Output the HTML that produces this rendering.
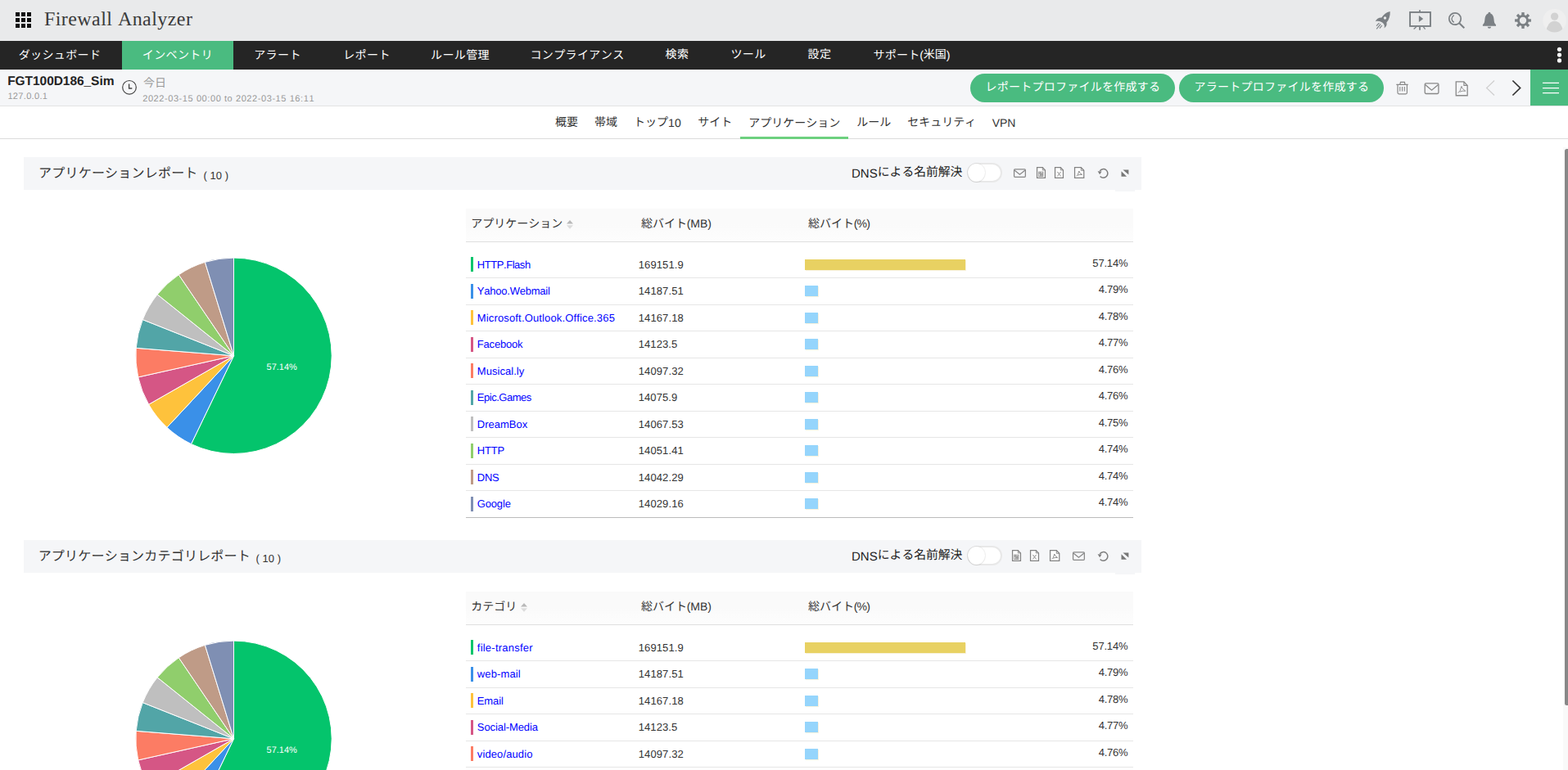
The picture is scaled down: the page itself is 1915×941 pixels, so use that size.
<!DOCTYPE html>
<html lang="ja"><head><meta charset="utf-8"><title>Firewall Analyzer</title>
<style>
html,body{margin:0;padding:0}
body{width:1915px;height:941px;overflow:hidden;background:#fff;position:relative;font-family:"Liberation Sans",sans-serif;font-size:13px;color:#333;font-kerning:none;text-rendering:geometricPrecision}
.t{position:absolute;white-space:nowrap;display:block}
.j{display:block;white-space:nowrap;font-family:"Liberation Sans","Noto Sans CJK JP",sans-serif}
.abs{position:absolute}
svg.ic{position:absolute;overflow:visible}

#top{position:absolute;left:0;top:0;width:1915px;height:50px;background:#e9eaeb}
#nav{position:absolute;left:0;top:50px;width:1915px;height:35px;background:#252525}
#nav .act{position:absolute;left:149px;top:0;width:136px;height:35px;background:#4abb80}
#sub{position:absolute;left:0;top:85px;width:1915px;height:44px;background:#f5f6f8;border-bottom:1px solid #e3e3e3}
.btn{position:absolute;top:5px;height:35px;width:250px;border-radius:18px;background:#4abb80}
#menu{position:absolute;left:1869px;top:0;width:46px;height:44px;background:#4abb80}
#tabs{position:absolute;left:0;top:130px;width:1915px;height:39px;border-bottom:1px solid #dcdcdc;background:#fff}
#tabs .ul{position:absolute;left:904px;top:37px;width:132px;height:3px;background:#6dd07f}
.rep{position:absolute;left:0;width:1915px;height:468px}
.rh{position:absolute;left:29px;top:0;width:1365px;height:40px;background:#f5f6f8}
.th{position:absolute;left:569px;top:63px;width:815px;height:40px;background:linear-gradient(#fafafa 48%,#fdfdfd);border-bottom:1px solid #dfdfdf}
.row{position:absolute;left:569px;width:815px;height:1px;background:#e6e6e6}
.row.last{background:#bcbcbc}
.cb{position:absolute;left:575px;width:3px;height:18px}
.bar{position:absolute;left:983px;height:13px;box-shadow:1px 1px 0 rgba(238,222,170,.4)}
.tog{position:absolute;left:1181px;top:7px;width:39px;height:20px;border-radius:12px;background:#fff;border:2px solid #e8e8e8}
.tog b{position:absolute;left:-1px;top:-1px;width:21px;height:22px;border-radius:50%;background:#fff;box-shadow:0 0 0 1px rgba(0,0,0,.06),0 1px 1px rgba(0,0,0,.05)}
#sbt{position:absolute;left:1909px;top:180px;width:6px;height:761px;background:#f9f9f9}
#sb{position:absolute;left:1911px;top:182px;width:4px;height:680px;background:#888;border-radius:2.5px 0 0 2.5px}
</style></head><body>
<div id="top"><svg class="ic" style="left:19px;top:15px" width="19" height="19" viewBox="0 0 19 19" fill="#111"><rect x="0" y="0" width="5" height="5"/><rect x="7" y="0" width="5" height="5"/><rect x="14" y="0" width="5" height="5"/><rect x="0" y="7" width="5" height="5"/><rect x="7" y="7" width="5" height="5"/><rect x="14" y="7" width="5" height="5"/><rect x="0" y="14" width="5" height="5"/><rect x="7" y="14" width="5" height="5"/><rect x="14" y="14" width="5" height="5"/></svg><span class="t" style="left:53.90px;top:12px;font-size:24px;line-height:24px;color:#3a3a3a;font-family:'Liberation Serif',serif;letter-spacing:0.445px;">Firewall Analyzer</span><svg class="ic" style="left:1676px;top:10px" width="26" height="28" viewBox="0 0 26 28"><path fill="#7b8084" fill-rule="evenodd" d="M21.7 4C17 5 13.5 8 11.4 11.6C8 11.3 5 13.5 3.8 16.2C6 15.5 9 15.8 11.2 16.9C12.5 17.6 13.7 18.7 14.4 19.9C15 21.5 15 23 14.4 24.5C17 23 18.2 20.5 17.4 17.6C20.5 14 22 9 21.7 4ZM15.5 10.3a1.7 1.7 0 1 0 .01 0Z"/><path stroke="#7b8084" stroke-width="1.1" fill="none" d="M8.4 18.1L5 21.7M10.2 19.4L5.2 25.4M11.9 21L8.9 24.7"/></svg><svg class="ic" style="left:1720px;top:11px" width="30" height="27" viewBox="0 0 30 27"><rect x="2.05" y="3.95" width="24.9" height="17" fill="none" stroke="#7b8084" stroke-width="1.9"/><path stroke="#7b8084" stroke-width="1.8" fill="none" d="M14 1.2V3.2M14 21.9V25.8"/><path stroke="#7b8084" stroke-width="1.3" fill="none" d="M9.6 21.9L6.6 24.6M18.4 21.9L20.6 24.6"/><path fill="#7b8084" d="M12.9 8.1V15.9L18.2 12Z"/></svg><svg class="ic" style="left:1766px;top:12px" width="26" height="26" viewBox="0 0 26 26" fill="none" stroke="#7b8084"><circle cx="11" cy="11" r="7.2" stroke-width="1.75"/><path stroke-width="2.1" d="M16.2 16.2L22.3 22.3"/><path stroke-width="1.4" d="M9.7 6.5Q4.2 11 9.7 15.4"/></svg><svg class="ic" style="left:1808px;top:12px" width="22" height="26" viewBox="0 0 22 26" fill="#7b8084"><path d="M10.95 2.8a1.5 1.5 0 0 1 1.5 1.6C15.2 5.5 16.3 8 16.5 11.5C16.7 15 17.2 16.8 19 18.2V19.85H2.9V18.2C4.7 16.8 5.2 15 5.4 11.5C5.6 8 6.7 5.5 9.45 4.4A1.5 1.5 0 0 1 10.95 2.8Z"/><path d="M8.8 20.7H13.1A2.15 2.15 0 0 1 8.8 20.7Z"/></svg><svg class="ic" style="left:1848px;top:13px" width="24" height="24" viewBox="-12 -12 24 24"><g fill="#7b8084"><rect x="-1.7" y="-9.9" width="3.4" height="4" transform="rotate(0)"/><rect x="-1.7" y="-9.9" width="3.4" height="4" transform="rotate(45)"/><rect x="-1.7" y="-9.9" width="3.4" height="4" transform="rotate(90)"/><rect x="-1.7" y="-9.9" width="3.4" height="4" transform="rotate(135)"/><rect x="-1.7" y="-9.9" width="3.4" height="4" transform="rotate(180)"/><rect x="-1.7" y="-9.9" width="3.4" height="4" transform="rotate(225)"/><rect x="-1.7" y="-9.9" width="3.4" height="4" transform="rotate(270)"/><rect x="-1.7" y="-9.9" width="3.4" height="4" transform="rotate(315)"/></g><circle r="5.6" fill="none" stroke="#7b8084" stroke-width="2.8"/></svg><svg class="ic" style="left:1884px;top:10px" width="31" height="31" viewBox="0 0 31 31"><defs><clipPath id="av"><circle cx="14.6" cy="15.2" r="14.3"/></clipPath></defs><circle cx="14.6" cy="15.2" r="14.3" fill="#efefef"/><g clip-path="url(#av)" fill="#d2d2d2"><circle cx="14.6" cy="10.1" r="4.65"/><ellipse cx="14.6" cy="28.5" rx="10" ry="12.7"/></g></svg></div><div id="nav"><div class="act"></div><span class="j" style="position:absolute;left:22.63px;top:9.84px;width:100.74px;height:15.30px;font-size:14px;line-height:15.30px;color:#fff;letter-spacing:0.39px;">ダッシュボード</span><span class="j" style="position:absolute;left:173.82px;top:9.65px;width:86.35px;height:15.30px;font-size:14px;line-height:15.30px;color:#fff;letter-spacing:0.39px;">インベントリ</span><span class="j" style="position:absolute;left:310.22px;top:9.54px;width:57.57px;height:15.30px;font-size:14px;line-height:15.30px;color:#fff;letter-spacing:0.39px;">アラート</span><span class="j" style="position:absolute;left:419.22px;top:10.11px;width:57.57px;height:15.30px;font-size:14px;line-height:15.30px;color:#fff;letter-spacing:0.39px;">レポート</span><span class="j" style="position:absolute;left:526.02px;top:9.79px;width:71.96px;height:15.30px;font-size:14px;line-height:15.30px;color:#fff;letter-spacing:0.39px;">ルール管理</span><span class="j" style="position:absolute;left:647.43px;top:9.99px;width:115.14px;height:15.30px;font-size:14px;line-height:15.30px;color:#fff;letter-spacing:0.39px;">コンプライアンス</span><span class="j" style="position:absolute;left:812.61px;top:10.45px;width:28.78px;height:13.85px;font-size:14px;line-height:13.85px;color:#fff;letter-spacing:0.39px;">検索</span><span class="j" style="position:absolute;left:892.41px;top:9.48px;width:43.18px;height:15.30px;font-size:14px;line-height:15.30px;color:#fff;letter-spacing:0.39px;">ツール</span><span class="j" style="position:absolute;left:986.61px;top:10.43px;width:28.78px;height:13.85px;font-size:14px;line-height:13.85px;color:#fff;letter-spacing:0.39px;">設定</span><span class="j" style="position:absolute;left:1066.44px;top:10.07px;width:57.12px;height:15.30px;font-size:14px;line-height:15.30px;color:#fff;letter-spacing:0.28px;">サポート</span><span class="t" style="left:1123.20px;top:10px;font-size:14px;line-height:14px;color:#fff;letter-spacing:-0.562px;">(</span><span class="j" style="position:absolute;left:1127.70px;top:10.48px;width:28.00px;height:13.85px;font-size:14px;line-height:13.85px;color:#fff;">米国</span><span class="t" style="left:1155.70px;top:10px;font-size:14px;line-height:14px;color:#fff;letter-spacing:-0.562px;">)</span><svg class="ic" style="left:1900px;top:7px" width="9" height="20" viewBox="0 0 9 20" fill="#fff"><circle cx="4.5" cy="3.3" r="2.6"/><circle cx="4.5" cy="10.1" r="2.6"/><circle cx="4.5" cy="16.9" r="2.6"/></svg></div><div id="sub"><span class="t" style="left:9.20px;top:7px;font-size:15.5px;line-height:15.5px;color:#222;font-weight:bold;letter-spacing:-0.054px;">FGT100D186_Sim</span><span class="t" style="left:9.40px;top:28px;font-size:11px;line-height:11px;color:#999;letter-spacing:0.336px;">127.0.0.1</span><svg class="ic" style="left:148px;top:12px" width="20" height="20" viewBox="0 0 20 20" fill="none" stroke="#444"><circle cx="10" cy="9.8" r="8.3" stroke-width="1.2"/><path stroke-width="1.4" d="M9.6 5.6V11H13.3"/></svg><span class="j" style="position:absolute;left:175.00px;top:9.61px;width:28.00px;height:13.58px;font-size:14px;line-height:13.58px;color:#9a9a9a;">今日</span><span class="t" style="left:174.20px;top:31px;font-size:11px;line-height:11px;color:#999;letter-spacing:0.581px;">2022-03-15 00:00 to 2022-03-15 16:11</span><div class="btn" style="left:1185px"></div><span class="j" style="position:absolute;left:1203.41px;top:13.72px;width:213.78px;height:15.20px;font-size:14px;line-height:15.20px;color:#fff;letter-spacing:0.25px;">レポートプロファイルを作成する</span><div class="btn" style="left:1440px"></div><span class="j" style="position:absolute;left:1458.41px;top:13.65px;width:213.78px;height:15.20px;font-size:14px;line-height:15.20px;color:#fff;letter-spacing:0.25px;">アラートプロファイルを作成する</span><svg class="ic" style="left:1703px;top:13px" width="20" height="20" viewBox="0 0 20 20" fill="none" stroke="#888" stroke-width="1.2"><path d="M2.3 5.3H16.7M6.7 5.3L7.5 2.4H12.4L13 5.3M4 5.3V15.3Q4 16.8 5.5 16.8H13.9Q15.4 16.8 15.4 15.3V5.3"/><path stroke-width="1.1" d="M6.8 8V13.6M9.6 8V13.6M12.3 8V13.6"/></svg><svg class="ic" style="left:1738px;top:15px" width="22" height="18" viewBox="0 0 22 18" fill="none" stroke="#888" stroke-width="1.3"><rect x="2.2" y="1.9" width="16.7" height="12.6" rx="1.4"/><path d="M2.6 3.6L10.5 10.2L18.5 3.6"/></svg><svg class="ic" style="left:1776px;top:13px" width="20" height="22" viewBox="0 0 20 22" fill="none" stroke="#888" stroke-width="1.3"><path d="M2.25 1.95H11.9L16.15 6.4V18.75H2.25Z"/><path d="M11.9 1.95V6.4H16.15" stroke-width="1.1"/><path stroke-width="0.9" d="M4.70 15.60 Q7.70 14.10 8.80 7.80 Q9.80 10.80 13.80 13.20 M8.80 7.80 Q9.10 7.00 9.40 8.20 M6.80 14.20 Q10.20 12.70 13.80 13.20"/></svg><svg class="ic" style="left:1812px;top:12px" width="16" height="22" viewBox="0 0 16 22" fill="none"><path stroke="#cfcfcf" stroke-width="1.2" d="M13 1.5L3.6 10.5L13 19.5"/></svg><svg class="ic" style="left:1844px;top:12px" width="16" height="22" viewBox="0 0 16 22" fill="none"><path stroke="#333" stroke-width="1.7" d="M3.4 1.5L12.6 10.5L3.4 19.5"/></svg><div id="menu"><svg class="ic" style="left:15px;top:14px" width="20" height="16" viewBox="0 0 20 16" stroke="#fff" stroke-width="1.25"><path d="M0 2.3H20M0 8.5H20M0 14.6H20"/></svg></div></div><div id="tabs"><span class="j" style="position:absolute;left:678.00px;top:13.10px;width:28.00px;height:13.58px;font-size:14px;line-height:13.58px;color:#333;">概要</span><span class="j" style="position:absolute;left:726.00px;top:13.11px;width:28.00px;height:13.58px;font-size:14px;line-height:13.58px;color:#333;">帯域</span><span class="j" style="position:absolute;left:852.20px;top:12.23px;width:42.00px;height:15.00px;font-size:14px;line-height:15.00px;color:#333;">サイト</span><span class="j" style="position:absolute;left:914.20px;top:12.51px;width:112.00px;height:15.00px;font-size:14px;line-height:15.00px;color:#333;">アプリケーション</span><span class="j" style="position:absolute;left:1046.20px;top:12.15px;width:42.00px;height:15.00px;font-size:14px;line-height:15.00px;color:#333;">ルール</span><span class="j" style="position:absolute;left:1108.20px;top:12.05px;width:84.00px;height:15.00px;font-size:14px;line-height:15.00px;color:#333;">セキュリティ</span><span class="j" style="position:absolute;left:774.00px;top:12.37px;width:42.00px;height:15.00px;font-size:14px;line-height:15.00px;color:#333;">トップ</span><span class="t" style="left:816.00px;top:13px;font-size:14px;line-height:14px;color:#333;letter-spacing:0.264px;">10</span><span class="t" style="left:1211.80px;top:13px;font-size:14px;line-height:14px;color:#333;letter-spacing:-0.095px;">VPN</span><div class="ul"></div></div><section class="rep" style="top:192px"><div class="rh"></div><div class="abs" style="left:1362px;top:40px;width:24px;height:2px;background:#f5f6f8"></div><span class="j" style="position:absolute;left:47.05px;top:12.33px;width:194.50px;height:17.10px;font-size:16px;line-height:17.10px;color:#333;letter-spacing:0.21px;">アプリケーションレポート</span><span class="t" style="left:248.50px;top:16px;font-size:13px;line-height:13px;color:#333;letter-spacing:0.026px;">( 10 )</span><span class="t" style="left:1040.10px;top:13px;font-size:15px;line-height:15px;color:#222;letter-spacing:-0.057px;">DNS</span><span class="j" style="position:absolute;left:1071.80px;top:11.47px;width:103.60px;height:16.10px;font-size:14.8px;line-height:16.10px;color:#222;">による名前解決</span><div class="tog"><b></b></div><svg class="ic" style="left:1236.6px;top:12.6px" width="18" height="14" viewBox="0 0 18 14" fill="none" stroke="#888" stroke-width="1.25"><rect x="1.55" y="1.75" width="13.8" height="9.5" rx="1"/><path d="M1.9 3L8.45 8.3L15 3"/></svg><svg class="ic" style="left:1264.5px;top:10.5px" width="14" height="16" viewBox="0 0 14 16" fill="none" stroke="#828282" stroke-width="1.25"><path fill="#fff" d="M1.55 1.55H8.3L11.45 4.9V14.3H1.55Z"/><path d="M8.3 1.55V4.9H11.45" stroke-width=".9"/><rect x="3.2" y="6.6" width="6.1" height="6.3" fill="#828282" stroke="none"/><g fill="#fff" stroke="none"><rect x="3.8" y="7.3" width="1" height="1"/><rect x="5.7" y="7.3" width="2.9" height="0.9"/><rect x="3.8" y="9.2" width="1" height="3.1"/><rect x="5.7" y="9.2" width="1" height="1"/><rect x="7.6" y="9.2" width="1" height="1"/><rect x="5.7" y="11.2" width="1" height="1"/><rect x="7.6" y="11.2" width="1" height="1"/></g></svg><svg class="ic" style="left:1286.5px;top:10.5px" width="14" height="16" viewBox="0 0 14 16" fill="none" stroke="#828282" stroke-width="1.25"><path fill="#fff" d="M1.55 1.55H8.3L11.45 4.9V14.3H1.55Z"/><path d="M8.3 1.55V4.9H11.45" stroke-width=".9"/><path stroke-width=".95" d="M4.4 6.9Q6.3 9.5 8.6 12.4M8.6 6.9Q6.4 9.8 4.4 12.4"/></svg><svg class="ic" style="left:1310.8px;top:10.5px" width="15" height="16" viewBox="0 0 15 16" fill="none" stroke="#828282" stroke-width="1.25"><path fill="#fff" d="M1.55 1.55H9.3L12.75 5.3V14.3H1.55Z"/><path d="M9.3 1.55V5.3H12.75" stroke-width=".9"/><path stroke-width="0.9" d="M3.49 12.32 Q5.83 11.15 6.69 6.24 Q7.47 8.58 10.59 10.45 M6.69 6.24 Q6.92 5.61 7.16 6.55 M5.13 11.23 Q7.78 10.06 10.59 10.45"/></svg><svg class="ic" style="left:1340px;top:12.2px" width="16" height="16" viewBox="0 0 16 16" fill="none" stroke="#7d7d7d" stroke-width="1.5"><path d="M3.2 4.9A5.3 5.3 0 1 1 3.6 11.4"/><path fill="#7d7d7d" stroke="none" d="M0.6 5.2L5.6 5.4L3.1 9.2Z"/></svg><svg class="ic" style="left:1369.4px;top:14.5px" width="11" height="10" viewBox="0 0 11 10" fill="#777"><path d="M2.4 .6H9.4V6.5Z"/><path d="M.5 2.3V8.7H7.1Z"/></svg><svg class="ic" style="left:160px;top:117px" width="252" height="252" viewBox="160 0 252 252"><g stroke="#fff" stroke-width="1" stroke-linejoin="round"><path fill="#04c46c" d="M285.50 125.80L285.50 6.10A119.70 119.70 0 1 1 233.54 233.63Z"/><path fill="#3a90e8" d="M285.50 125.80L233.54 233.63A119.70 119.70 0 0 1 203.89 213.36Z"/><path fill="#fec23c" d="M285.50 125.80L203.89 213.36A119.70 119.70 0 0 1 181.61 185.26Z"/><path fill="#d55685" d="M285.50 125.80L181.61 185.26A119.70 119.70 0 0 1 168.69 151.93Z"/><path fill="#fc7c64" d="M285.50 125.80L168.69 151.93A119.70 119.70 0 0 1 166.18 116.33Z"/><path fill="#52a5a7" d="M285.50 125.80L166.18 116.33A119.70 119.70 0 0 1 174.25 81.62Z"/><path fill="#bfbfbf" d="M285.50 125.80L174.25 81.62A119.70 119.70 0 0 1 192.17 50.85Z"/><path fill="#90ce6c" d="M285.50 125.80L192.17 50.85A119.70 119.70 0 0 1 218.32 26.73Z"/><path fill="#bf9b87" d="M285.50 125.80L218.32 26.73A119.70 119.70 0 0 1 250.38 11.37Z"/><path fill="#7f8fb3" d="M285.50 125.80L250.38 11.37A119.70 119.70 0 0 1 285.50 6.10Z"/></g><text x="344.2" y="143.2" text-anchor="middle" font-family="Liberation Sans,sans-serif" font-size="11" fill="#fff">57.14%</text></svg><div class="th"></div><span class="j" style="position:absolute;left:575.30px;top:73.81px;width:112.00px;height:15.00px;font-size:14px;line-height:15.00px;color:#333;">アプリケーション</span><svg class="ic" style="left:692.2px;top:77px" width="8" height="11" viewBox="0 0 8 11"><path fill="#b9b9b9" d="M4 0L8 4.6H0Z"/><path fill="#dcdcdc" d="M0 6.2H8L4 10.8Z"/></svg><span class="j" style="position:absolute;left:783.00px;top:73.71px;width:56.00px;height:15.00px;font-size:14px;line-height:15.00px;color:#333;">総バイト</span><span class="t" style="left:838.70px;top:74px;font-size:14px;line-height:14px;color:#333;letter-spacing:-0.056px;">(MB)</span><span class="j" style="position:absolute;left:987.00px;top:73.71px;width:56.00px;height:15.00px;font-size:14px;line-height:15.00px;color:#333;">総バイト</span><span class="t" style="left:1042.70px;top:74px;font-size:14px;line-height:14px;color:#333;letter-spacing:-0.757px;">(%)</span><div class="cb" style="top:122.2px;background:#04c46c"></div><span class="t" style="left:582.80px;top:125px;font-size:13px;line-height:13px;color:#0000ff;letter-spacing:-0.444px;">HTTP.Flash</span><span class="t" style="left:779.70px;top:125px;font-size:13px;line-height:13px;color:#333;letter-spacing:0.116px;">169151.9</span><div class="bar" style="top:125.0px;width:196.0px;background:#e8d162"></div><span class="t" style="left:1334.36px;top:123px;font-size:13px;line-height:13px;color:#333;letter-spacing:-0.191px;">57.14%</span><div class="row" style="top:147px"></div><div class="cb" style="top:154.7px;background:#3a90e8"></div><span class="t" style="left:582.80px;top:157px;font-size:13px;line-height:13px;color:#0000ff;letter-spacing:-0.221px;">Yahoo.Webmail</span><span class="t" style="left:779.70px;top:157px;font-size:13px;line-height:13px;color:#333;letter-spacing:0.116px;">14187.51</span><div class="bar" style="top:157.0px;width:16.0px;background:#95d5fc"></div><span class="t" style="left:1341.80px;top:155px;font-size:13px;line-height:13px;color:#333;letter-spacing:-0.291px;">4.79%</span><div class="row" style="top:180px"></div><div class="cb" style="top:187.2px;background:#fec23c"></div><span class="t" style="left:582.80px;top:190px;font-size:13px;line-height:13px;color:#0000ff;letter-spacing:0.150px;">Microsoft.Outlook.Office.365</span><span class="t" style="left:779.70px;top:190px;font-size:13px;line-height:13px;color:#333;letter-spacing:0.116px;">14167.18</span><div class="bar" style="top:190.0px;width:16.0px;background:#95d5fc"></div><span class="t" style="left:1341.80px;top:188px;font-size:13px;line-height:13px;color:#333;letter-spacing:-0.291px;">4.78%</span><div class="row" style="top:212px"></div><div class="cb" style="top:219.7px;background:#d55685"></div><span class="t" style="left:582.80px;top:222px;font-size:13px;line-height:13px;color:#0000ff;letter-spacing:-0.186px;">Facebook</span><span class="t" style="left:779.70px;top:222px;font-size:13px;line-height:13px;color:#333;letter-spacing:0.088px;">14123.5</span><div class="bar" style="top:222.0px;width:16.0px;background:#95d5fc"></div><span class="t" style="left:1341.80px;top:220px;font-size:13px;line-height:13px;color:#333;letter-spacing:-0.291px;">4.77%</span><div class="row" style="top:245px"></div><div class="cb" style="top:252.2px;background:#fc7c64"></div><span class="t" style="left:582.80px;top:255px;font-size:13px;line-height:13px;color:#0000ff;letter-spacing:0.043px;">Musical.ly</span><span class="t" style="left:779.70px;top:255px;font-size:13px;line-height:13px;color:#333;letter-spacing:0.116px;">14097.32</span><div class="bar" style="top:255.0px;width:16.0px;background:#95d5fc"></div><span class="t" style="left:1341.80px;top:253px;font-size:13px;line-height:13px;color:#333;letter-spacing:-0.291px;">4.76%</span><div class="row" style="top:277px"></div><div class="cb" style="top:284.7px;background:#52a5a7"></div><span class="t" style="left:582.80px;top:287px;font-size:13px;line-height:13px;color:#0000ff;letter-spacing:-0.480px;">Epic.Games</span><span class="t" style="left:779.70px;top:287px;font-size:13px;line-height:13px;color:#333;letter-spacing:0.088px;">14075.9</span><div class="bar" style="top:287.0px;width:16.0px;background:#95d5fc"></div><span class="t" style="left:1341.80px;top:285px;font-size:13px;line-height:13px;color:#333;letter-spacing:-0.291px;">4.76%</span><div class="row" style="top:310px"></div><div class="cb" style="top:317.2px;background:#bfbfbf"></div><span class="t" style="left:582.80px;top:320px;font-size:13px;line-height:13px;color:#0000ff;">DreamBox</span><span class="t" style="left:779.70px;top:320px;font-size:13px;line-height:13px;color:#333;letter-spacing:0.116px;">14067.53</span><div class="bar" style="top:320.0px;width:16.0px;background:#95d5fc"></div><span class="t" style="left:1341.80px;top:318px;font-size:13px;line-height:13px;color:#333;letter-spacing:-0.291px;">4.75%</span><div class="row" style="top:342px"></div><div class="cb" style="top:349.7px;background:#90ce6c"></div><span class="t" style="left:582.80px;top:352px;font-size:13px;line-height:13px;color:#0000ff;letter-spacing:-0.160px;">HTTP</span><span class="t" style="left:779.70px;top:352px;font-size:13px;line-height:13px;color:#333;letter-spacing:0.116px;">14051.41</span><div class="bar" style="top:352.0px;width:16.0px;background:#95d5fc"></div><span class="t" style="left:1341.80px;top:350px;font-size:13px;line-height:13px;color:#333;letter-spacing:-0.291px;">4.74%</span><div class="row" style="top:375px"></div><div class="cb" style="top:382.2px;background:#bf9b87"></div><span class="t" style="left:582.80px;top:385px;font-size:13px;line-height:13px;color:#0000ff;letter-spacing:-0.249px;">DNS</span><span class="t" style="left:779.70px;top:385px;font-size:13px;line-height:13px;color:#333;letter-spacing:0.116px;">14042.29</span><div class="bar" style="top:385.0px;width:16.0px;background:#95d5fc"></div><span class="t" style="left:1341.80px;top:383px;font-size:13px;line-height:13px;color:#333;letter-spacing:-0.291px;">4.74%</span><div class="row" style="top:407px"></div><div class="cb" style="top:414.7px;background:#7f8fb3"></div><span class="t" style="left:582.80px;top:417px;font-size:13px;line-height:13px;color:#0000ff;letter-spacing:-0.170px;">Google</span><span class="t" style="left:779.70px;top:417px;font-size:13px;line-height:13px;color:#333;letter-spacing:0.116px;">14029.16</span><div class="bar" style="top:417.0px;width:16.0px;background:#95d5fc"></div><span class="t" style="left:1341.80px;top:415px;font-size:13px;line-height:13px;color:#333;letter-spacing:-0.291px;">4.74%</span><div class="row last" style="top:440px"></div></section><section class="rep" style="top:660px"><div class="rh"></div><div class="abs" style="left:1362px;top:40px;width:24px;height:2px;background:#f5f6f8"></div><span class="j" style="position:absolute;left:46.64px;top:12.37px;width:259.33px;height:17.10px;font-size:16px;line-height:17.10px;color:#333;letter-spacing:0.21px;">アプリケーションカテゴリレポート</span><span class="t" style="left:312.50px;top:16px;font-size:13px;line-height:13px;color:#333;letter-spacing:0.026px;">( 10 )</span><span class="t" style="left:1040.10px;top:13px;font-size:15px;line-height:15px;color:#222;letter-spacing:-0.057px;">DNS</span><span class="j" style="position:absolute;left:1071.80px;top:11.47px;width:103.60px;height:16.10px;font-size:14.8px;line-height:16.10px;color:#222;">による名前解決</span><div class="tog"><b></b></div><svg class="ic" style="left:1234.5px;top:10.5px" width="14" height="16" viewBox="0 0 14 16" fill="none" stroke="#828282" stroke-width="1.25"><path fill="#fff" d="M1.55 1.55H8.3L11.45 4.9V14.3H1.55Z"/><path d="M8.3 1.55V4.9H11.45" stroke-width=".9"/><rect x="3.2" y="6.6" width="6.1" height="6.3" fill="#828282" stroke="none"/><g fill="#fff" stroke="none"><rect x="3.8" y="7.3" width="1" height="1"/><rect x="5.7" y="7.3" width="2.9" height="0.9"/><rect x="3.8" y="9.2" width="1" height="3.1"/><rect x="5.7" y="9.2" width="1" height="1"/><rect x="7.6" y="9.2" width="1" height="1"/><rect x="5.7" y="11.2" width="1" height="1"/><rect x="7.6" y="11.2" width="1" height="1"/></g></svg><svg class="ic" style="left:1256.5px;top:10.5px" width="14" height="16" viewBox="0 0 14 16" fill="none" stroke="#828282" stroke-width="1.25"><path fill="#fff" d="M1.55 1.55H8.3L11.45 4.9V14.3H1.55Z"/><path d="M8.3 1.55V4.9H11.45" stroke-width=".9"/><path stroke-width=".95" d="M4.4 6.9Q6.3 9.5 8.6 12.4M8.6 6.9Q6.4 9.8 4.4 12.4"/></svg><svg class="ic" style="left:1280.5px;top:10.5px" width="15" height="16" viewBox="0 0 15 16" fill="none" stroke="#828282" stroke-width="1.25"><path fill="#fff" d="M1.55 1.55H9.3L12.75 5.3V14.3H1.55Z"/><path d="M9.3 1.55V5.3H12.75" stroke-width=".9"/><path stroke-width="0.9" d="M3.49 12.32 Q5.83 11.15 6.69 6.24 Q7.47 8.58 10.59 10.45 M6.69 6.24 Q6.92 5.61 7.16 6.55 M5.13 11.23 Q7.78 10.06 10.59 10.45"/></svg><svg class="ic" style="left:1308.7px;top:12.6px" width="18" height="14" viewBox="0 0 18 14" fill="none" stroke="#888" stroke-width="1.25"><rect x="1.55" y="1.75" width="13.8" height="9.5" rx="1"/><path d="M1.9 3L8.45 8.3L15 3"/></svg><svg class="ic" style="left:1340px;top:12.2px" width="16" height="16" viewBox="0 0 16 16" fill="none" stroke="#7d7d7d" stroke-width="1.5"><path d="M3.2 4.9A5.3 5.3 0 1 1 3.6 11.4"/><path fill="#7d7d7d" stroke="none" d="M0.6 5.2L5.6 5.4L3.1 9.2Z"/></svg><svg class="ic" style="left:1369.4px;top:14.5px" width="11" height="10" viewBox="0 0 11 10" fill="#777"><path d="M2.4 .6H9.4V6.5Z"/><path d="M.5 2.3V8.7H7.1Z"/></svg><svg class="ic" style="left:160px;top:117px" width="252" height="252" viewBox="160 0 252 252"><g stroke="#fff" stroke-width="1" stroke-linejoin="round"><path fill="#04c46c" d="M285.50 125.80L285.50 6.10A119.70 119.70 0 1 1 233.54 233.63Z"/><path fill="#3a90e8" d="M285.50 125.80L233.54 233.63A119.70 119.70 0 0 1 203.89 213.36Z"/><path fill="#fec23c" d="M285.50 125.80L203.89 213.36A119.70 119.70 0 0 1 181.61 185.26Z"/><path fill="#d55685" d="M285.50 125.80L181.61 185.26A119.70 119.70 0 0 1 168.69 151.93Z"/><path fill="#fc7c64" d="M285.50 125.80L168.69 151.93A119.70 119.70 0 0 1 166.18 116.33Z"/><path fill="#52a5a7" d="M285.50 125.80L166.18 116.33A119.70 119.70 0 0 1 174.25 81.62Z"/><path fill="#bfbfbf" d="M285.50 125.80L174.25 81.62A119.70 119.70 0 0 1 192.17 50.85Z"/><path fill="#90ce6c" d="M285.50 125.80L192.17 50.85A119.70 119.70 0 0 1 218.32 26.73Z"/><path fill="#bf9b87" d="M285.50 125.80L218.32 26.73A119.70 119.70 0 0 1 250.38 11.37Z"/><path fill="#7f8fb3" d="M285.50 125.80L250.38 11.37A119.70 119.70 0 0 1 285.50 6.10Z"/></g><text x="344.2" y="143.2" text-anchor="middle" font-family="Liberation Sans,sans-serif" font-size="11" fill="#fff">57.14%</text></svg><div class="th"></div><span class="j" style="position:absolute;left:575.30px;top:74.04px;width:56.00px;height:15.00px;font-size:14px;line-height:15.00px;color:#333;">カテゴリ</span><svg class="ic" style="left:636.2px;top:77px" width="8" height="11" viewBox="0 0 8 11"><path fill="#b9b9b9" d="M4 0L8 4.6H0Z"/><path fill="#dcdcdc" d="M0 6.2H8L4 10.8Z"/></svg><span class="j" style="position:absolute;left:783.00px;top:73.71px;width:56.00px;height:15.00px;font-size:14px;line-height:15.00px;color:#333;">総バイト</span><span class="t" style="left:838.70px;top:74px;font-size:14px;line-height:14px;color:#333;letter-spacing:-0.056px;">(MB)</span><span class="j" style="position:absolute;left:987.00px;top:73.71px;width:56.00px;height:15.00px;font-size:14px;line-height:15.00px;color:#333;">総バイト</span><span class="t" style="left:1042.70px;top:74px;font-size:14px;line-height:14px;color:#333;letter-spacing:-0.757px;">(%)</span><div class="cb" style="top:122.2px;background:#04c46c"></div><span class="t" style="left:582.80px;top:125px;font-size:13px;line-height:13px;color:#0000ff;letter-spacing:0.229px;">file-transfer</span><span class="t" style="left:779.70px;top:125px;font-size:13px;line-height:13px;color:#333;letter-spacing:0.116px;">169151.9</span><div class="bar" style="top:125.0px;width:196.0px;background:#e8d162"></div><span class="t" style="left:1334.36px;top:123px;font-size:13px;line-height:13px;color:#333;letter-spacing:-0.191px;">57.14%</span><div class="row" style="top:147px"></div><div class="cb" style="top:154.7px;background:#3a90e8"></div><span class="t" style="left:582.80px;top:157px;font-size:13px;line-height:13px;color:#0000ff;letter-spacing:0.123px;">web-mail</span><span class="t" style="left:779.70px;top:157px;font-size:13px;line-height:13px;color:#333;letter-spacing:0.116px;">14187.51</span><div class="bar" style="top:157.0px;width:16.0px;background:#95d5fc"></div><span class="t" style="left:1341.80px;top:155px;font-size:13px;line-height:13px;color:#333;letter-spacing:-0.291px;">4.79%</span><div class="row" style="top:180px"></div><div class="cb" style="top:187.2px;background:#fec23c"></div><span class="t" style="left:582.80px;top:190px;font-size:13px;line-height:13px;color:#0000ff;letter-spacing:-0.121px;">Email</span><span class="t" style="left:779.70px;top:190px;font-size:13px;line-height:13px;color:#333;letter-spacing:0.116px;">14167.18</span><div class="bar" style="top:190.0px;width:16.0px;background:#95d5fc"></div><span class="t" style="left:1341.80px;top:188px;font-size:13px;line-height:13px;color:#333;letter-spacing:-0.291px;">4.78%</span><div class="row" style="top:212px"></div><div class="cb" style="top:219.7px;background:#d55685"></div><span class="t" style="left:582.80px;top:222px;font-size:13px;line-height:13px;color:#0000ff;letter-spacing:-0.087px;">Social-Media</span><span class="t" style="left:779.70px;top:222px;font-size:13px;line-height:13px;color:#333;letter-spacing:0.088px;">14123.5</span><div class="bar" style="top:222.0px;width:16.0px;background:#95d5fc"></div><span class="t" style="left:1341.80px;top:220px;font-size:13px;line-height:13px;color:#333;letter-spacing:-0.291px;">4.77%</span><div class="row" style="top:245px"></div><div class="cb" style="top:252.2px;background:#fc7c64"></div><span class="t" style="left:582.80px;top:255px;font-size:13px;line-height:13px;color:#0000ff;letter-spacing:0.109px;">video/audio</span><span class="t" style="left:779.70px;top:255px;font-size:13px;line-height:13px;color:#333;letter-spacing:0.116px;">14097.32</span><div class="bar" style="top:255.0px;width:16.0px;background:#95d5fc"></div><span class="t" style="left:1341.80px;top:253px;font-size:13px;line-height:13px;color:#333;letter-spacing:-0.291px;">4.76%</span><div class="row" style="top:277px"></div></section><div id="sbt"></div><div id="sb"></div></body></html>
